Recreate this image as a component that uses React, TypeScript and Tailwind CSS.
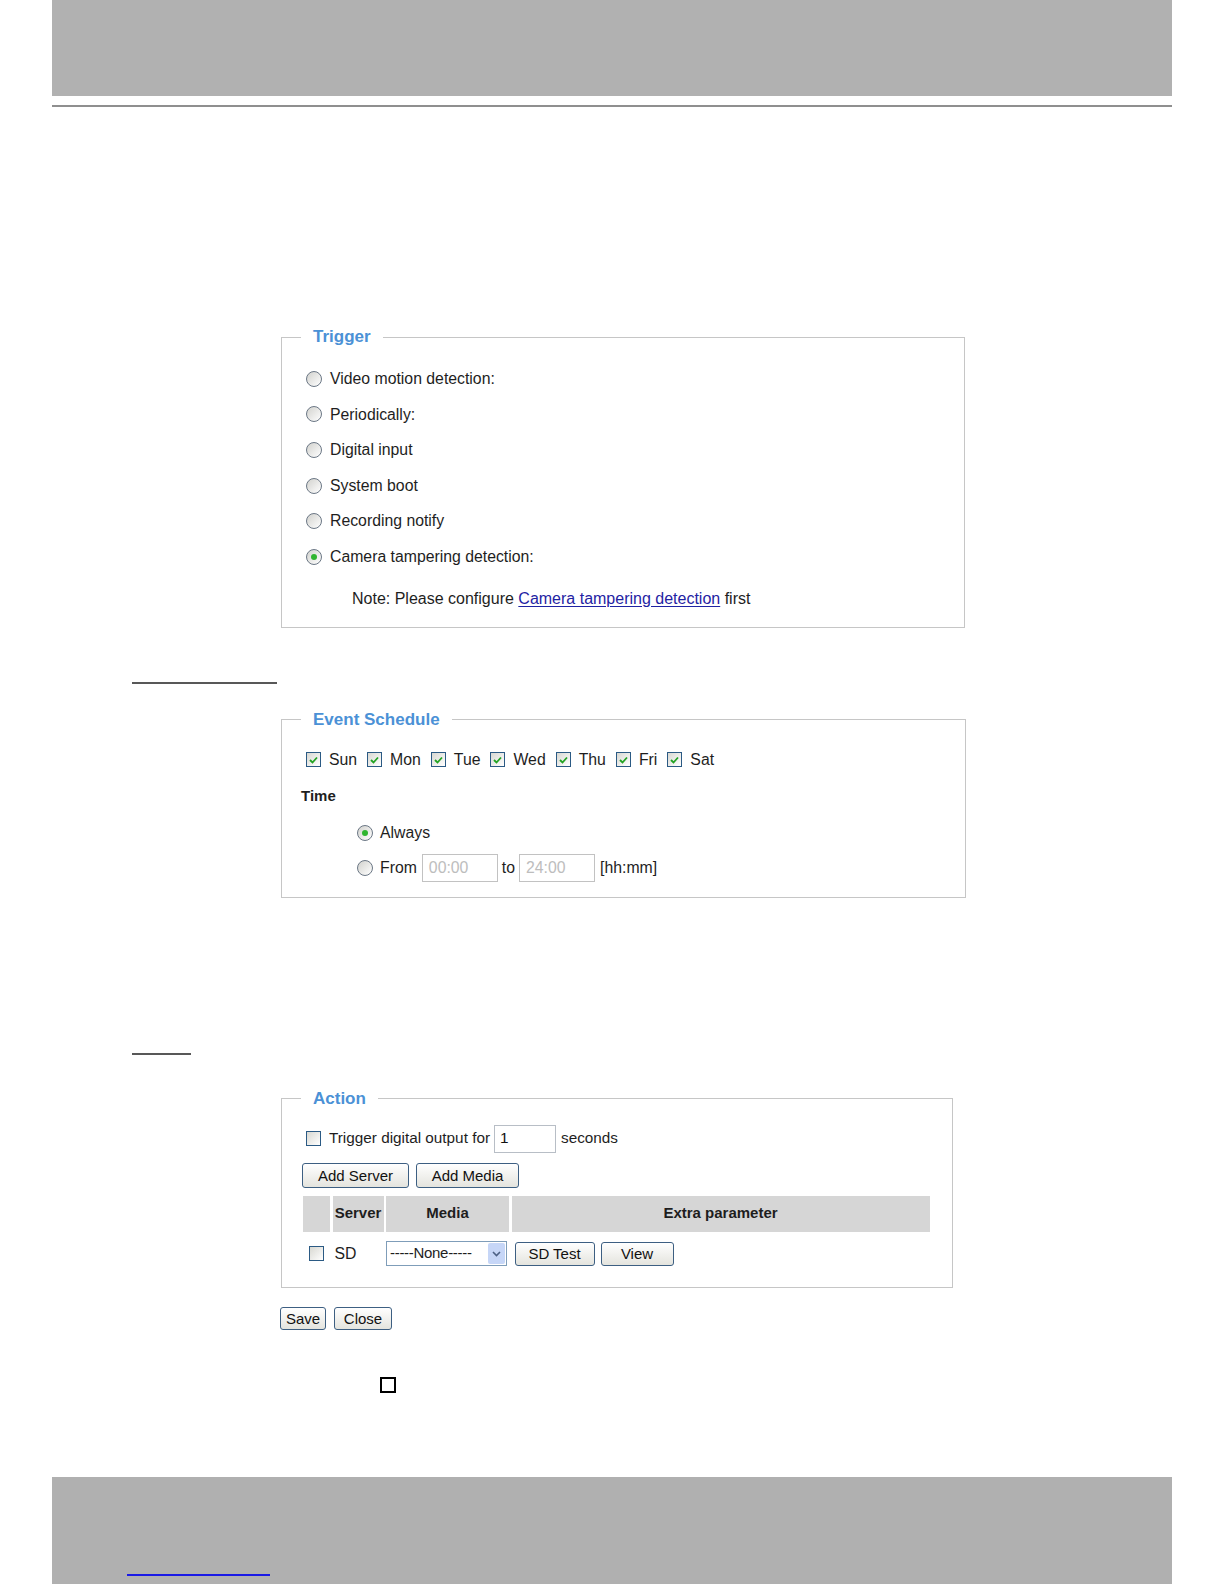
import React from 'react';

const Radio = ({ checked = false }: { checked?: boolean }) => (
    <span className="flex h-[16px] w-[16px] shrink-0 items-center justify-center rounded-full border border-[#6b7785] bg-linear-to-br from-[#d2d2ce] to-white">
        {checked && <span className="h-[6px] w-[6px] rounded-full bg-[#2fb52f]" />}
    </span>
);

const Check = ({ checked = false }: { checked?: boolean }) => (
    <span className="flex h-[15px] w-[15px] shrink-0 items-center justify-center border border-[#2b5a84] bg-linear-to-br from-[#d8d8d2] to-white">
        {checked && (
            <svg width="9" height="8" viewBox="0 0 9 8">
                <path d="M1 4 L3.5 6.5 L8 1.5" fill="none" stroke="#22a322" strokeWidth="1.8" />
            </svg>
        )}
    </span>
);

const Btn = ({ children, className = '' }: { children: React.ReactNode; className?: string }) => (
    <button
        className={
            'flex items-center justify-center rounded-[3px] border border-[#3d5f82] bg-linear-to-b from-white to-[#e4e4de] text-[15px] leading-none text-[#111] ' +
            className
        }
    >
        {children}
    </button>
);

const Legend = ({ children }: { children: React.ReactNode }) => (
    <legend className="ml-[19px] px-[12px] text-[17px] font-bold leading-[22px] text-[#4b91d6]">{children}</legend>
);

const triggers = ['Video motion detection:', 'Periodically:', 'Digital input', 'System boot', 'Recording notify'];
const days = ['Sun', 'Mon', 'Tue', 'Wed', 'Thu', 'Fri', 'Sat'];

export default function App() {
    return (
        <div className="flex min-h-[1584px] w-[1224px] flex-col bg-white font-['Liberation_Sans',Arial,sans-serif] text-[15.8px] text-[#1e1e1e]">
            {/* Header */}
            <div className="mx-[52px] h-[96px] shrink-0 bg-[#b1b1b1]" />
            <div className="mx-[52px] mt-[9px] h-[2px] shrink-0 bg-[#8f8f8f]" />

            {/* Trigger */}
            <fieldset className="ml-[281px] mt-[219px] w-[684px] border border-[#c6c6c6] p-0">
                <Legend>Trigger</Legend>
                <div className="pl-[24px] pt-[13px] pb-[18px]">
                    {triggers.map((t) => (
                        <div key={t} className="flex h-[35.6px] items-center gap-[8px]">
                            <Radio />
                            <span>{t}</span>
                        </div>
                    ))}
                    <div className="flex h-[35.6px] items-center gap-[8px]">
                        <Radio checked />
                        <span>Camera tampering detection:</span>
                    </div>
                    <div className="mt-[14px] h-[20px] pl-[46px] text-[16px] leading-[20px]">
                        Note: Please configure{' '}
                        <a href="#" className="text-[#1f23a3] underline underline-offset-2">
                            Camera tampering detection
                        </a>{' '}
                        first
                    </div>
                </div>
            </fieldset>

            <div className="ml-[132px] mt-[54px] h-[2px] w-[145px] bg-[#585858]" />

            {/* Event Schedule */}
            <fieldset className="ml-[281px] mt-[25px] w-[685px] border border-[#c6c6c6] p-0">
                <Legend>Event Schedule</Legend>
                <div className="pl-[19px] pt-[17px] pb-[15px]">
                    <div className="ml-[5px] flex h-[24px] items-center gap-[10px]">
                        {days.map((d) => (
                            <div key={d} className="flex items-center gap-[8px]">
                                <Check checked />
                                <span>{d}</span>
                            </div>
                        ))}
                    </div>
                    <div className="mt-[13px] flex h-[24px] items-center text-[15px] font-bold">Time</div>
                    <div className="ml-[56px] mt-[10px] flex h-[28px] items-center gap-[7px]">
                        <Radio checked />
                        <span>Always</span>
                    </div>
                    <div className="ml-[56px] mt-[7px] flex h-[28px] items-center">
                        <Radio />
                        <span className="ml-[7px]">From</span>
                        <span className="ml-[5px] flex h-[28px] w-[76px] items-center border border-[#c2c2c2] pl-[6px] text-[#bdbdbd]">
                            00:00
                        </span>
                        <span className="ml-[4px]">to</span>
                        <span className="ml-[4px] flex h-[28px] w-[76px] items-center border border-[#c2c2c2] pl-[6px] text-[#bdbdbd]">
                            24:00
                        </span>
                        <span className="ml-[5px]">[hh:mm]</span>
                    </div>
                </div>
            </fieldset>

            <div className="ml-[132px] mt-[155px] h-[2px] w-[59px] bg-[#585858]" />

            {/* Action */}
            <fieldset className="ml-[281px] mt-[33px] w-[672px] border border-[#c6c6c6] p-0">
                <Legend>Action</Legend>
                <div className="pl-[20px] pt-[15px] pb-[20px]">
                    <div className="ml-[4px] flex h-[28px] items-center text-[15.3px]">
                        <Check />
                        <span className="ml-[8px]">Trigger digital output for</span>
                        <span className="ml-[4px] flex h-[28px] w-[62px] items-center border border-[#b8bec6] pl-[5px] text-[#111]">1</span>
                        <span className="ml-[5px]">seconds</span>
                    </div>
                    <div className="mt-[10px] flex h-[25px] gap-[7px]">
                        <Btn className="w-[107px]">Add Server</Btn>
                        <Btn className="w-[103px]">Add Media</Btn>
                    </div>
                    <div className="ml-[1px] mt-[8px] grid h-[36px] grid-cols-[27px_51px_123px_418px] gap-x-[2.5px] text-[15px] font-bold">
                        <div className="bg-[#d6d6d6]" />
                        <div className="flex items-center justify-center bg-[#d6d6d6]">Server</div>
                        <div className="flex items-center justify-center bg-[#d6d6d6]">Media</div>
                        <div className="flex items-center justify-center bg-[#d6d6d6]">Extra parameter</div>
                    </div>
                    <div className="ml-[1px] mt-[9px] grid h-[26px] grid-cols-[27px_51px_123px_418px] items-center gap-x-[2.5px]">
                        <div className="pl-[6px]">
                            <Check />
                        </div>
                        <div className="pl-[2px]">SD</div>
                        <div className="flex h-[25px] w-[121px] items-center border border-[#7f9db9] bg-white">
                            <span className="flex-1 pl-[3px] text-[15px] tracking-[-0.3px]">-----None-----</span>
                            <span className="mr-[1px] flex h-[21px] w-[17px] items-center justify-center rounded-[2px] bg-[#c6d6f7]">
                                <svg width="9" height="6" viewBox="0 0 9 6">
                                    <path d="M1 1 L4.5 4.5 L8 1" fill="none" stroke="#4d6185" strokeWidth="1.6" />
                                </svg>
                            </span>
                        </div>
                        <div className="flex gap-[6px] pl-[3px]">
                            <Btn className="h-[24px] w-[80px]">SD Test</Btn>
                            <Btn className="h-[24px] w-[73px]">View</Btn>
                        </div>
                    </div>
                </div>
            </fieldset>

            <div className="ml-[280px] mt-[19px] flex h-[23px] gap-[8px]">
                <Btn className="w-[46px]">Save</Btn>
                <Btn className="w-[58px]">Close</Btn>
            </div>

            <div className="ml-[380px] mt-[47px] h-[16px] w-[16px] border-2 border-black" />

            {/* Footer */}
            <div className="mx-[52px] mt-auto h-[107px] shrink-0 bg-[#b0b0b0] pl-[75px] pt-[97px]">
                <div className="h-[2px] w-[143px] bg-[#1a1ae6]" />
            </div>
        </div>
    );
}
